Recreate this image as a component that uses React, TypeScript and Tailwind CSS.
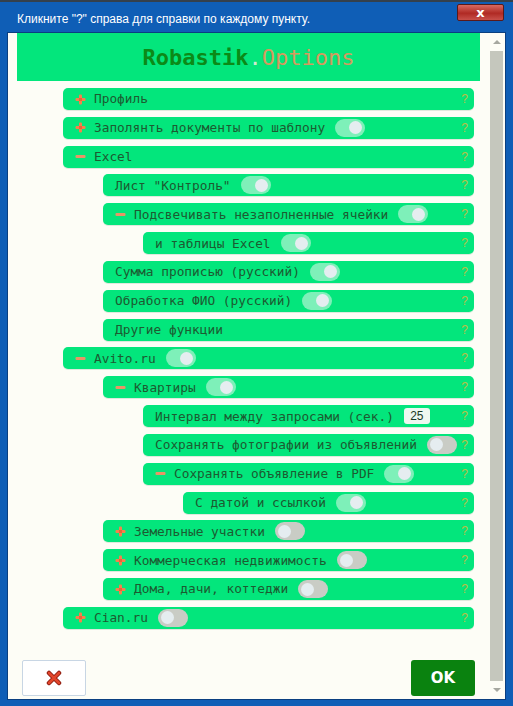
import React from 'react';

// строки дерева настроек
interface OptionRow {
  label: string;
  level: number;
  icon?: 'plus' | 'minus';
  toggle?: boolean;
  input?: string;
}

const rows: OptionRow[] = [
  { label: 'Профиль', level: 0, icon: 'plus' },
  { label: 'Заполянть документы по шаблону', level: 0, icon: 'plus', toggle: true },
  { label: 'Excel', level: 0, icon: 'minus' },
  { label: 'Лист "Контроль"', level: 1, toggle: true },
  { label: 'Подсвечивать незаполненные ячейки', level: 1, icon: 'minus', toggle: true },
  { label: 'и таблицы Excel', level: 2, toggle: true },
  { label: 'Сумма прописью (русский)', level: 1, toggle: true },
  { label: 'Обработка ФИО (русский)', level: 1, toggle: true },
  { label: 'Другие функции', level: 1 },
  { label: 'Avito.ru', level: 0, icon: 'minus', toggle: true },
  { label: 'Квартиры', level: 1, icon: 'minus', toggle: true },
  { label: 'Интервал между запросами (сек.)', level: 2, input: '25' },
  { label: 'Сохранять фотографии из объявлений', level: 2, toggle: false },
  { label: 'Сохранять объявление в PDF', level: 2, icon: 'minus', toggle: true },
  { label: 'С датой и ссылкой', level: 3, toggle: true },
  { label: 'Земельные участки', level: 1, icon: 'plus', toggle: false },
  { label: 'Коммерческая недвижимость', level: 1, icon: 'plus', toggle: false },
  { label: 'Дома, дачи, коттеджи', level: 1, icon: 'plus', toggle: false },
  { label: 'Cian.ru', level: 0, icon: 'plus', toggle: false },
];

const levelMargin = ['ml-0', 'ml-[40px]', 'ml-[80px]', 'ml-[120px]'];

function PlusIcon() {
  return (
    <svg width="11" height="11" viewBox="0 0 11 11" className="shrink-0">
      <rect x="4" y="0.5" width="3" height="10" rx="1" fill="#f5814c" />
      <rect x="0.5" y="4" width="10" height="3" rx="1" fill="#f5814c" />
      <rect x="4" y="4" width="3" height="3" fill="#e8643a" />
    </svg>
  );
}

function MinusIcon() {
  return (
    <svg width="11" height="11" viewBox="0 0 11 11" className="shrink-0">
      <rect x="0.5" y="4" width="10" height="3" rx="1" fill="#e99566" />
    </svg>
  );
}

function Toggle({ on }: { on: boolean }) {
  return (
    <div
      className={`ml-[10px] w-[30px] h-[18px] rounded-full flex items-center px-[3px] shrink-0 ${
        on ? 'bg-[#7ef0b9] justify-end' : 'bg-[#c9ccc5] justify-start'
      }`}
    >
      <div className="w-[13px] h-[13px] rounded-full bg-[#e5edf0]" />
    </div>
  );
}

function Row({ row }: { row: OptionRow }) {
  return (
    <div
      className={`${levelMargin[row.level]} h-[22px] rounded-[5px] bg-[#03e67c] flex items-center pl-[12px] pr-[6px] shadow-[0_1px_0_rgba(0,90,40,0.12)]`}
    >
      {row.icon === 'plus' && <PlusIcon />}
      {row.icon === 'minus' && <MinusIcon />}
      <span className={`${row.icon ? 'ml-[8px]' : ''} whitespace-pre`}>{row.label}</span>
      {row.toggle !== undefined && <Toggle on={row.toggle} />}
      {row.input && (
        <div className="ml-[10px] w-[26px] h-[16px] rounded-[3px] bg-[#eef8f0] flex items-center justify-center text-[12px] text-[#1b3a24] font-['Liberation_Sans',sans-serif]">
          {row.input}
        </div>
      )}
      <span className="ml-auto text-[12px] text-[#bcbd44] font-['Liberation_Sans',sans-serif]">?</span>
    </div>
  );
}

export default function App() {
  return (
    <div className="w-[513px] h-[706px] bg-[#0f5eb6] flex flex-col overflow-hidden">
      {/* полоса сверху */}
      <div className="h-[2px] bg-[#34404c] shrink-0" />

      {/* заголовок окна */}
      <div className="h-[30px] shrink-0 flex items-start relative">
        <span className="ml-[17px] mt-[8px] text-[12px] text-white font-['Liberation_Sans',sans-serif]">
          Кликните "?" справа для справки по каждому пункту.
        </span>
        <div className="absolute left-[457px] top-[2px] w-[47px] h-[17px] rounded-[2px] border border-[#5a1a1a] bg-[linear-gradient(#d86a62,#b02a24_55%,#c8504a)] flex items-center justify-center">
          <span className="text-white text-[13px] font-bold leading-none font-['DejaVu_Sans',sans-serif]">x</span>
        </div>
      </div>

      {/* содержимое */}
      <div className="flex-1 ml-[7px] mr-[7px] mb-[6px] border border-[#0a3f80] bg-[#fdfdf6] flex min-h-0">
        <div className="flex-1 flex flex-col pl-[9px] pr-[8px] font-['DejaVu_Sans_Mono',monospace] text-[12.8px] text-[#1d5a31]">
          <div className="h-[48px] bg-[#03e67c] flex items-center justify-center text-[22px]">
            <span className="font-bold text-[#0c8a17]">Robastik</span>
            <span className="text-[#cfe9cf]">.</span>
            <span className="text-[#d69a5e]">Options</span>
          </div>

          <div className="pt-[7px] pl-[46px] pr-[6px] flex flex-col gap-[6.83px]">
            {rows.map((row, i) => (
              <Row key={i} row={row} />
            ))}
          </div>

          <div className="mt-auto mb-[3px] px-[5px] flex justify-between items-end">
            <div className="w-[64px] h-[36px] rounded-[2px] border border-[#c8d6e4] bg-white flex items-center justify-center">
              <svg width="16" height="16" viewBox="0 0 16 16">
                <path d="M3 3 L13 13 M13 3 L3 13" stroke="#8e1c10" strokeWidth="4.5" strokeLinecap="round" />
                <path d="M3 3 L13 13 M13 3 L3 13" stroke="#e2452a" strokeWidth="2.6" strokeLinecap="round" />
              </svg>
            </div>
            <div className="w-[64px] h-[36px] rounded-[3px] bg-[#0a820f] flex items-center justify-center text-white font-bold text-[15px] font-['DejaVu_Sans',sans-serif]">
              OK
            </div>
          </div>
        </div>

        {/* полоса прокрутки */}
        <div className="w-[17px] flex flex-col items-center shrink-0">
          <div className="h-[18px] flex items-center justify-center">
            <div className="w-0 h-0 border-l-[4px] border-r-[4px] border-b-[4px] border-l-transparent border-r-transparent border-b-[#a6a8a0]" />
          </div>
          <div className="flex-1 w-[13px] bg-[#c5c7bd]" />
          <div className="h-[18px] flex items-center justify-center">
            <div className="w-0 h-0 border-l-[4px] border-r-[4px] border-t-[4px] border-l-transparent border-r-transparent border-t-[#a6a8a0]" />
          </div>
        </div>
      </div>
    </div>
  );
}
